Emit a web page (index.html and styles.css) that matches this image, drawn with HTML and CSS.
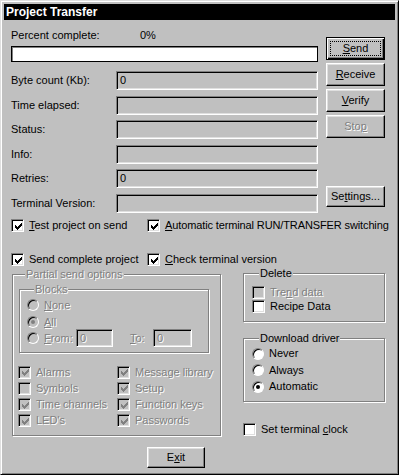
FILE: index.html
```html
<!DOCTYPE html>
<html lang="en">
<head>
    <meta charset="UTF-8">
    <meta name="viewport" content="width=device-width, initial-scale=1.0">
    <title>Project Transfer</title>
    <link rel="stylesheet" href="styles.css">
</head>
<body>

<div class="window">
    <div class="titlebar">Project Transfer</div>

    <div class="main">
        <div class="top">
            <div class="top-left">
                <div class="percent-row">
                    <span class="percent-label">Percent complete:</span>
                    <span>0%</span>
                </div>
                <div class="progress"></div>

                <div class="fields">
                    <label>Byte count (Kb):</label>
                    <div class="field">0</div>
                    <label>Time elapsed:</label>
                    <div class="field"></div>
                    <label>Status:</label>
                    <div class="field"></div>
                    <label>Info:</label>
                    <div class="field"></div>
                    <label>Retries:</label>
                    <div class="field">0</div>
                    <label>Terminal Version:</label>
                    <div class="field"></div>
                </div>
            </div>

            <div class="top-buttons">
                <button class="btn default send"><u>S</u>end</button>
                <button class="btn"><u>R</u>eceive</button>
                <button class="btn"><u>V</u>erify</button>
                <button class="btn disabled">Sto<u>p</u></button>
                <button class="btn settings">Se<u>t</u>tings...</button>
            </div>
        </div>

        <div class="check-row first">
            <div class="check-item col1">
                <span class="cb"><svg class="tick" viewBox="0 0 7 7"><path d="M6 0h1v1h-1zM5 1h2v1h-2zM0 2h1v1h-1zM4 2h3v1h-3zM0 3h2v1h-2zM3 3h3v1h-3zM0 4h5v1h-5zM1 5h3v1h-3zM2 6h1v1h-1z"/></svg></span>
                <span><u>T</u>est project on send</span>
            </div>
            <div class="check-item">
                <span class="cb"><svg class="tick" viewBox="0 0 7 7"><path d="M6 0h1v1h-1zM5 1h2v1h-2zM0 2h1v1h-1zM4 2h3v1h-3zM0 3h2v1h-2zM3 3h3v1h-3zM0 4h5v1h-5zM1 5h3v1h-3zM2 6h1v1h-1z"/></svg></span>
                <span class="tight"><u>A</u>utomatic terminal RUN/TRANSFER switching</span>
            </div>
        </div>

        <div class="check-row second">
            <div class="check-item col1">
                <span class="cb"><svg class="tick" viewBox="0 0 7 7"><path d="M6 0h1v1h-1zM5 1h2v1h-2zM0 2h1v1h-1zM4 2h3v1h-3zM0 3h2v1h-2zM3 3h3v1h-3zM0 4h5v1h-5zM1 5h3v1h-3zM2 6h1v1h-1z"/></svg></span>
                <span>Send complete project</span>
            </div>
            <div class="check-item">
                <span class="cb"><svg class="tick" viewBox="0 0 7 7"><path d="M6 0h1v1h-1zM5 1h2v1h-2zM0 2h1v1h-1zM4 2h3v1h-3zM0 3h2v1h-2zM3 3h3v1h-3zM0 4h5v1h-5zM1 5h3v1h-3zM2 6h1v1h-1z"/></svg></span>
                <span><u>C</u>heck terminal version</span>
            </div>
        </div>

        <div class="bottom">
            <fieldset class="group partial">
                <legend class="dis">Partial send options</legend>

                <fieldset class="group blocks">
                    <legend class="dis">Blocks</legend>
                    <div class="radio-item dis">
                        <span class="rb off"></span>
                        <span><u>N</u>one</span>
                    </div>
                    <div class="radio-item dis all">
                        <span class="rb off"><span class="dot"></span></span>
                        <span><u>A</u>ll</span>
                    </div>
                    <div class="from-row dis">
                        <span class="rb off"></span>
                        <span class="from-label"><u>F</u>rom:</span>
                        <div class="field small from">0</div>
                        <span class="to-label"><u>T</u>o:</span>
                        <div class="field small to">0</div>
                    </div>
                </fieldset>

                <div class="part-grid dis">
                    <div class="check-item"><span class="cb off"><svg class="tick" viewBox="0 0 7 7"><path d="M6 0h1v1h-1zM5 1h2v1h-2zM0 2h1v1h-1zM4 2h3v1h-3zM0 3h2v1h-2zM3 3h3v1h-3zM0 4h5v1h-5zM1 5h3v1h-3zM2 6h1v1h-1z"/></svg></span><span>Alarms</span></div>
                    <div class="check-item"><span class="cb off"><svg class="tick" viewBox="0 0 7 7"><path d="M6 0h1v1h-1zM5 1h2v1h-2zM0 2h1v1h-1zM4 2h3v1h-3zM0 3h2v1h-2zM3 3h3v1h-3zM0 4h5v1h-5zM1 5h3v1h-3zM2 6h1v1h-1z"/></svg></span><span>Message library</span></div>
                    <div class="check-item"><span class="cb off"></span><span>Symbols</span></div>
                    <div class="check-item"><span class="cb off"><svg class="tick" viewBox="0 0 7 7"><path d="M6 0h1v1h-1zM5 1h2v1h-2zM0 2h1v1h-1zM4 2h3v1h-3zM0 3h2v1h-2zM3 3h3v1h-3zM0 4h5v1h-5zM1 5h3v1h-3zM2 6h1v1h-1z"/></svg></span><span>Setup</span></div>
                    <div class="check-item"><span class="cb off"><svg class="tick" viewBox="0 0 7 7"><path d="M6 0h1v1h-1zM5 1h2v1h-2zM0 2h1v1h-1zM4 2h3v1h-3zM0 3h2v1h-2zM3 3h3v1h-3zM0 4h5v1h-5zM1 5h3v1h-3zM2 6h1v1h-1z"/></svg></span><span>Time channels</span></div>
                    <div class="check-item"><span class="cb off"><svg class="tick" viewBox="0 0 7 7"><path d="M6 0h1v1h-1zM5 1h2v1h-2zM0 2h1v1h-1zM4 2h3v1h-3zM0 3h2v1h-2zM3 3h3v1h-3zM0 4h5v1h-5zM1 5h3v1h-3zM2 6h1v1h-1z"/></svg></span><span>Function keys</span></div>
                    <div class="check-item"><span class="cb off"><svg class="tick" viewBox="0 0 7 7"><path d="M6 0h1v1h-1zM5 1h2v1h-2zM0 2h1v1h-1zM4 2h3v1h-3zM0 3h2v1h-2zM3 3h3v1h-3zM0 4h5v1h-5zM1 5h3v1h-3zM2 6h1v1h-1z"/></svg></span><span>LED's</span></div>
                    <div class="check-item"><span class="cb off"><svg class="tick" viewBox="0 0 7 7"><path d="M6 0h1v1h-1zM5 1h2v1h-2zM0 2h1v1h-1zM4 2h3v1h-3zM0 3h2v1h-2zM3 3h3v1h-3zM0 4h5v1h-5zM1 5h3v1h-3zM2 6h1v1h-1z"/></svg></span><span>Passwords</span></div>
                </div>
            </fieldset>

            <div class="bottom-right">
                <fieldset class="group delete">
                    <legend>Delete</legend>
                    <div class="check-item dis"><span class="cb off"></span><span>Tre<u>n</u>d data</span></div>
                    <div class="check-item"><span class="cb"></span><span>Recipe Data</span></div>
                </fieldset>

                <fieldset class="group driver">
                    <legend>Download driver</legend>
                    <div class="radio-item"><span class="rb"></span><span>Never</span></div>
                    <div class="radio-item"><span class="rb"></span><span>Always</span></div>
                    <div class="radio-item"><span class="rb"><span class="dot"></span></span><span>Automatic</span></div>
                </fieldset>

                <div class="check-item clock">
                    <span class="cb"></span>
                    <span>Set terminal <u>c</u>lock</span>
                </div>
            </div>
        </div>

        <button class="btn exit">E<u>x</u>it</button>
    </div>
</div>

</body>
</html>
```

FILE: styles.css
```css
html, body {
    margin: 0;
    padding: 0;
    background: #c0c0c0;
}
body {
    font-family: "Liberation Sans", Arial, sans-serif;
    font-size: 11px;
    line-height: 13px;
    color: #000;
}
u {
    text-decoration: underline;
    text-underline-offset: 1px;
}
.window {
    width: 399px;
    height: 475px;
    box-sizing: border-box;
    border: 1px solid;
    border-color: #dfdfdf #000 #000 #dfdfdf;
    box-shadow: inset 1px 1px 0 #fff, inset -1px -1px 0 #808080;
    padding: 3px;
    background: #c0c0c0;
}
.titlebar {
    height: 16px;
    line-height: 16px;
    background: #000;
    color: #fff;
    font-weight: bold;
    font-size: 12px;
    padding-left: 2px;
}
.main {
    padding: 0 10px 0 7px;
}

/* top area: fields + buttons */
.top {
    display: flex;
    gap: 8px;
}
.top-left {
    width: 307px;
}
.percent-row {
    display: flex;
    margin-top: 9px;
}
.percent-label {
    width: 129px;
}
.progress {
    margin-top: 4px;
    height: 16px;
    box-sizing: border-box;
    background: #fff;
    border: 1px solid #000;
    box-shadow: inset 1px 1px 0 #808080;
}
.fields {
    margin-top: 9px;
    display: grid;
    grid-template-columns: 105px 202px;
    grid-auto-rows: 19px;
    row-gap: 5.5px;
    align-items: center;
}
.field {
    height: 19px;
    box-sizing: border-box;
    border: 1px solid;
    border-color: #808080 #fff #fff #808080;
    box-shadow: inset 1px 1px 0 #000, inset -1px -1px 0 #dfdfdf;
    padding: 2px 0 0 3px;
    line-height: 13px;
}
.top-buttons {
    width: 59px;
    display: flex;
    flex-direction: column;
}

/* buttons */
.btn {
    font-family: inherit;
    font-size: 11px;
    line-height: 13px;
    color: #000;
    background: #c0c0c0;
    border: 1px solid;
    border-color: #fff #000 #000 #fff;
    box-shadow: inset -1px -1px 0 #808080, inset 1px 1px 0 #dfdfdf;
    padding: 0;
    height: 23px;
    width: 59px;
    margin-top: 3px;
    position: relative;
}
.btn.send {
    margin-top: 17px;
}
.btn.default {
    border-color: #000;
    box-shadow: inset 1px 1px 0 #fff, inset -1px -1px 0 #000, inset -2px -2px 0 #808080;
}
.btn.default::after {
    content: "";
    position: absolute;
    top: 3px;
    left: 3px;
    right: 3px;
    bottom: 3px;
    border: 1px dotted #000;
}
.btn.disabled {
    color: #808080;
    text-shadow: 1px 1px 0 #fff;
}
.btn.settings {
    margin-top: auto;
    margin-bottom: 5.5px;
    height: 21px;
}
.btn.exit {
    margin-top: 11px;
    margin-left: 136px;
    width: 58px;
    height: 21px;
}

/* checkboxes and radios */
.check-row {
    display: flex;
}
.check-row.first {
    margin-top: 6.5px;
}
.check-row.second {
    margin-top: 21px;
}
.check-item,
.radio-item {
    display: flex;
    align-items: center;
    gap: 5px;
    height: 13px;
    white-space: nowrap;
}
.check-row .col1 {
    width: 136px;
    flex: none;
}
.tight {
    letter-spacing: -0.12px;
}
.cb {
    width: 13px;
    height: 13px;
    box-sizing: border-box;
    border: 1px solid;
    border-color: #808080 #fff #fff #808080;
    box-shadow: inset 1px 1px 0 #000, inset -1px -1px 0 #dfdfdf;
    background: #fff;
    display: flex;
    align-items: center;
    justify-content: center;
    color: #000;
    flex: none;
}
.cb.off {
    background: #c0c0c0;
    color: #808080;
}
.tick {
    width: 7px;
    height: 7px;
    fill: currentColor;
    shape-rendering: crispEdges;
    margin: 1px 0 0 1px;
}
.rb {
    width: 12px;
    height: 12px;
    box-sizing: border-box;
    border-radius: 50%;
    border: 1px solid;
    border-color: #808080 #fff #fff #808080;
    box-shadow: inset 1px 1px 0 #000;
    background: #fff;
    display: flex;
    align-items: center;
    justify-content: center;
    flex: none;
}
.rb.off {
    background: #c0c0c0;
}
.dot {
    width: 4px;
    height: 4px;
    border-radius: 50%;
    background: #000;
}
.rb.off .dot {
    background: #808080;
}
.dis {
    color: #808080;
    text-shadow: 1px 1px 0 #fff;
}

/* group boxes */
.bottom {
    display: flex;
    align-items: flex-start;
    margin-top: 1.5px;
}
.group {
    margin: 0;
    padding: 0;
    min-inline-size: 0;
    border: 1px solid #808080;
    box-shadow: inset 1px 1px 0 #fff, 1px 1px 0 #fff;
}
.group legend {
    padding: 0 1px;
    margin-left: 6px;
    line-height: 13px;
    background: #c0c0c0;
}
.partial {
    width: 209px;
    box-sizing: border-box;
    margin-left: 1px;
    padding: 2px 11px 8px 6px;
}
.blocks {
    width: 190px;
    box-sizing: border-box;
    padding: 3px 7px 5px 7px;
}
.blocks legend {
    margin-left: 7px;
}
.blocks .all {
    margin-top: 4px;
}
.from-row {
    display: flex;
    align-items: center;
    margin-top: 0.5px;
    height: 18px;
}
.from-label {
    margin-left: 5px;
    width: 32px;
}
.field.small {
    height: 18px;
    padding-top: 2px;
}
.field.from {
    width: 37px;
}
.to-label {
    margin-left: 17px;
    width: 23px;
}
.field.to {
    width: 39px;
}
.part-grid {
    margin-top: 12.7px;
    margin-left: -1px;
    display: grid;
    grid-template-columns: 99px 1fr;
    grid-auto-rows: 13px;
    row-gap: 3.2px;
}

.bottom-right {
    width: 142px;
    margin-left: 22px;
    margin-top: -1px;
}
.delete {
    padding: 6.5px 8px 8px 8px;
}
.delete legend, .driver legend {
    margin-left: 7px;
}
.delete .check-item + .check-item {
    margin-top: 1px;
}
.driver {
    margin-top: 10px;
    padding: 2px 8px 8px 8px;
}
.driver .radio-item + .radio-item {
    margin-top: 3.5px;
}
.clock {
    margin-top: 20.5px;
}
```
